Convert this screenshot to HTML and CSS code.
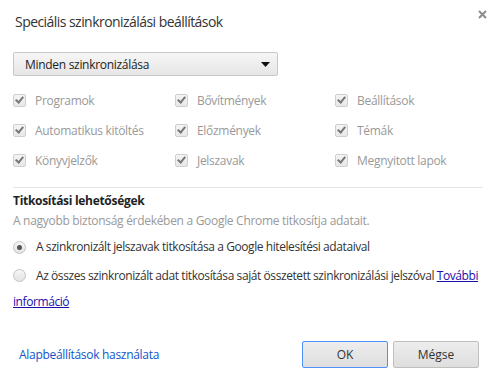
FILE: index.html
```html
<!DOCTYPE html>
<html lang="hu">
  <head>
    <meta charset="UTF-8" />
    <title>Speciális szinkronizálási beállítások</title>
    <link rel="stylesheet" href="styles.css">
  </head>
  <body>
    <div class="dialog">
      <div class="header">
        <h1 class="title">Speciális szinkronizálási beállítások</h1>
        <span class="close">
          <svg width="9" height="9" viewBox="0 0 9 9">
            <path d="M1 1 L8 8 M8 1 L1 8" stroke="#8c8c8c" stroke-width="2" />
          </svg>
        </span>
      </div>

      <div class="select">
        <span>Minden szinkronizálása</span>
        <svg class="arrow" width="9" height="5" viewBox="0 0 9 5">
          <path d="M0 0 H9 L4.5 5 Z" fill="#111" />
        </svg>
      </div>

      <div class="checkGrid">
        <label class="check"><span class="box"></span>Programok</label>
        <label class="check"><span class="box"></span>Bővítmények</label>
        <label class="check"><span class="box"></span>Beállítások</label>
        <label class="check"><span class="box"></span>Automatikus kitöltés</label>
        <label class="check"><span class="box"></span>Előzmények</label>
        <label class="check"><span class="box"></span>Témák</label>
        <label class="check"><span class="box"></span>Könyvjelzők</label>
        <label class="check"><span class="box"></span>Jelszavak</label>
        <label class="check"><span class="box"></span>Megnyitott lapok</label>
      </div>

      <div class="encryption">
        <h2 class="sectionTitle">Titkosítási lehetőségek</h2>
        <p class="description">A nagyobb biztonság érdekében a Google Chrome titkosítja adatait.</p>
        <label class="radio"><span class="dot checked"></span>A szinkronizált jelszavak titkosítása a Google hitelesítési adataival</label>
        <label class="radio wrap"><span class="dot"></span>Az összes szinkronizált adat titkosítása saját összetett szinkronizálási jelszóval <a href="#" class="more">További információ</a></label>
      </div>

      <div class="footer">
        <a href="#" class="defaults">Alapbeállítások használata</a>
        <div class="buttons">
          <button class="focused">OK</button>
          <button>Mégse</button>
        </div>
      </div>
    </div>
  </body>
</html>
```

FILE: styles.css
```css
body {
  margin: 0;
  background-color: #fff;
  font-family: "Open Sans", sans-serif;
  font-size: 12px;
  letter-spacing: -0.3px;
  color: #333;
}

.dialog {
  width: 497px;
  height: 382px;
  box-sizing: border-box;
  padding: 0 10px 0 13px;
}

.header {
  display: flex;
  justify-content: space-between;
  align-items: flex-start;
  height: 52px;
}
.title {
  margin: 12px 0 0 2px;
  font-size: 14px;
  font-weight: normal;
  letter-spacing: -0.55px;
  color: #333;
}
.close {
  margin: 10px 0 0 0;
  display: flex;
}

.select {
  width: 265px;
  height: 24px;
  box-sizing: border-box;
  display: flex;
  justify-content: space-between;
  align-items: center;
  padding: 0 7px 0 11px;
  border: 1px solid #c8c8c8;
  border-radius: 2px;
  background: linear-gradient(#f6f6f6, #e6e6e6);
  color: #222;
}

.checkGrid {
  display: grid;
  grid-template-columns: 162px 160px 1fr;
  grid-auto-rows: 13px;
  row-gap: 17px;
  margin: 18px 4px 0 0;
  padding-bottom: 20px;
  border-bottom: 1px solid #e4e4e4;
}
.check {
  display: flex;
  align-items: center;
  gap: 9px;
  color: #999;
}
.box {
  position: relative;
  width: 11px;
  height: 11px;
  border: 1px solid #cfcfcf;
  border-radius: 2px;
  background: linear-gradient(#f4f4f4, #e8e8e8);
}
.box::after {
  content: "";
  position: absolute;
  left: 3px;
  top: 0px;
  width: 3px;
  height: 6px;
  border: solid #777;
  border-width: 0 2px 2px 0;
  transform: rotate(40deg);
}

.encryption {
  padding-top: 5px;
  line-height: 16px;
}
.sectionTitle {
  margin: 0;
  font-size: 12px;
  font-weight: bold;
  color: #222;
}
.description {
  margin: 4px 0 10px;
  color: #999;
}
.radio {
  display: flex;
  align-items: center;
  gap: 10px;
  letter-spacing: -0.42px;
  color: #333;
}
.radio.wrap {
  display: block;
  line-height: 26px;
  margin-top: 8px;
}
.radio.wrap .dot {
  display: inline-block;
  vertical-align: -2px;
  margin-right: 10px;
}
.dot {
  position: relative;
  flex: none;
  width: 13px;
  height: 13px;
  box-sizing: border-box;
  border: 1px solid #c4c4c4;
  border-radius: 50%;
  background: linear-gradient(#f6f6f6, #e2e2e2);
}
.dot.checked::after {
  content: "";
  position: absolute;
  left: 3px;
  top: 3px;
  width: 5px;
  height: 5px;
  border-radius: 50%;
  background-color: #555;
}
.more {
  color: #1a0dab;
}

.footer {
  display: flex;
  justify-content: space-between;
  align-items: center;
  margin: 26px 8px 0 0;
  padding-left: 6px;
}
.defaults {
  color: #15c;
  text-decoration: none;
}
.buttons {
  display: flex;
  gap: 5px;
}
button {
  width: 86px;
  height: 27px;
  border: 1px solid #c0c0c0;
  border-radius: 2px;
  background: linear-gradient(#ededed, #dedede);
  font-family: "Open Sans", sans-serif;
  font-size: 12px;
  color: #333;
}
button.focused {
  border-color: #4d90fe;
}
```
